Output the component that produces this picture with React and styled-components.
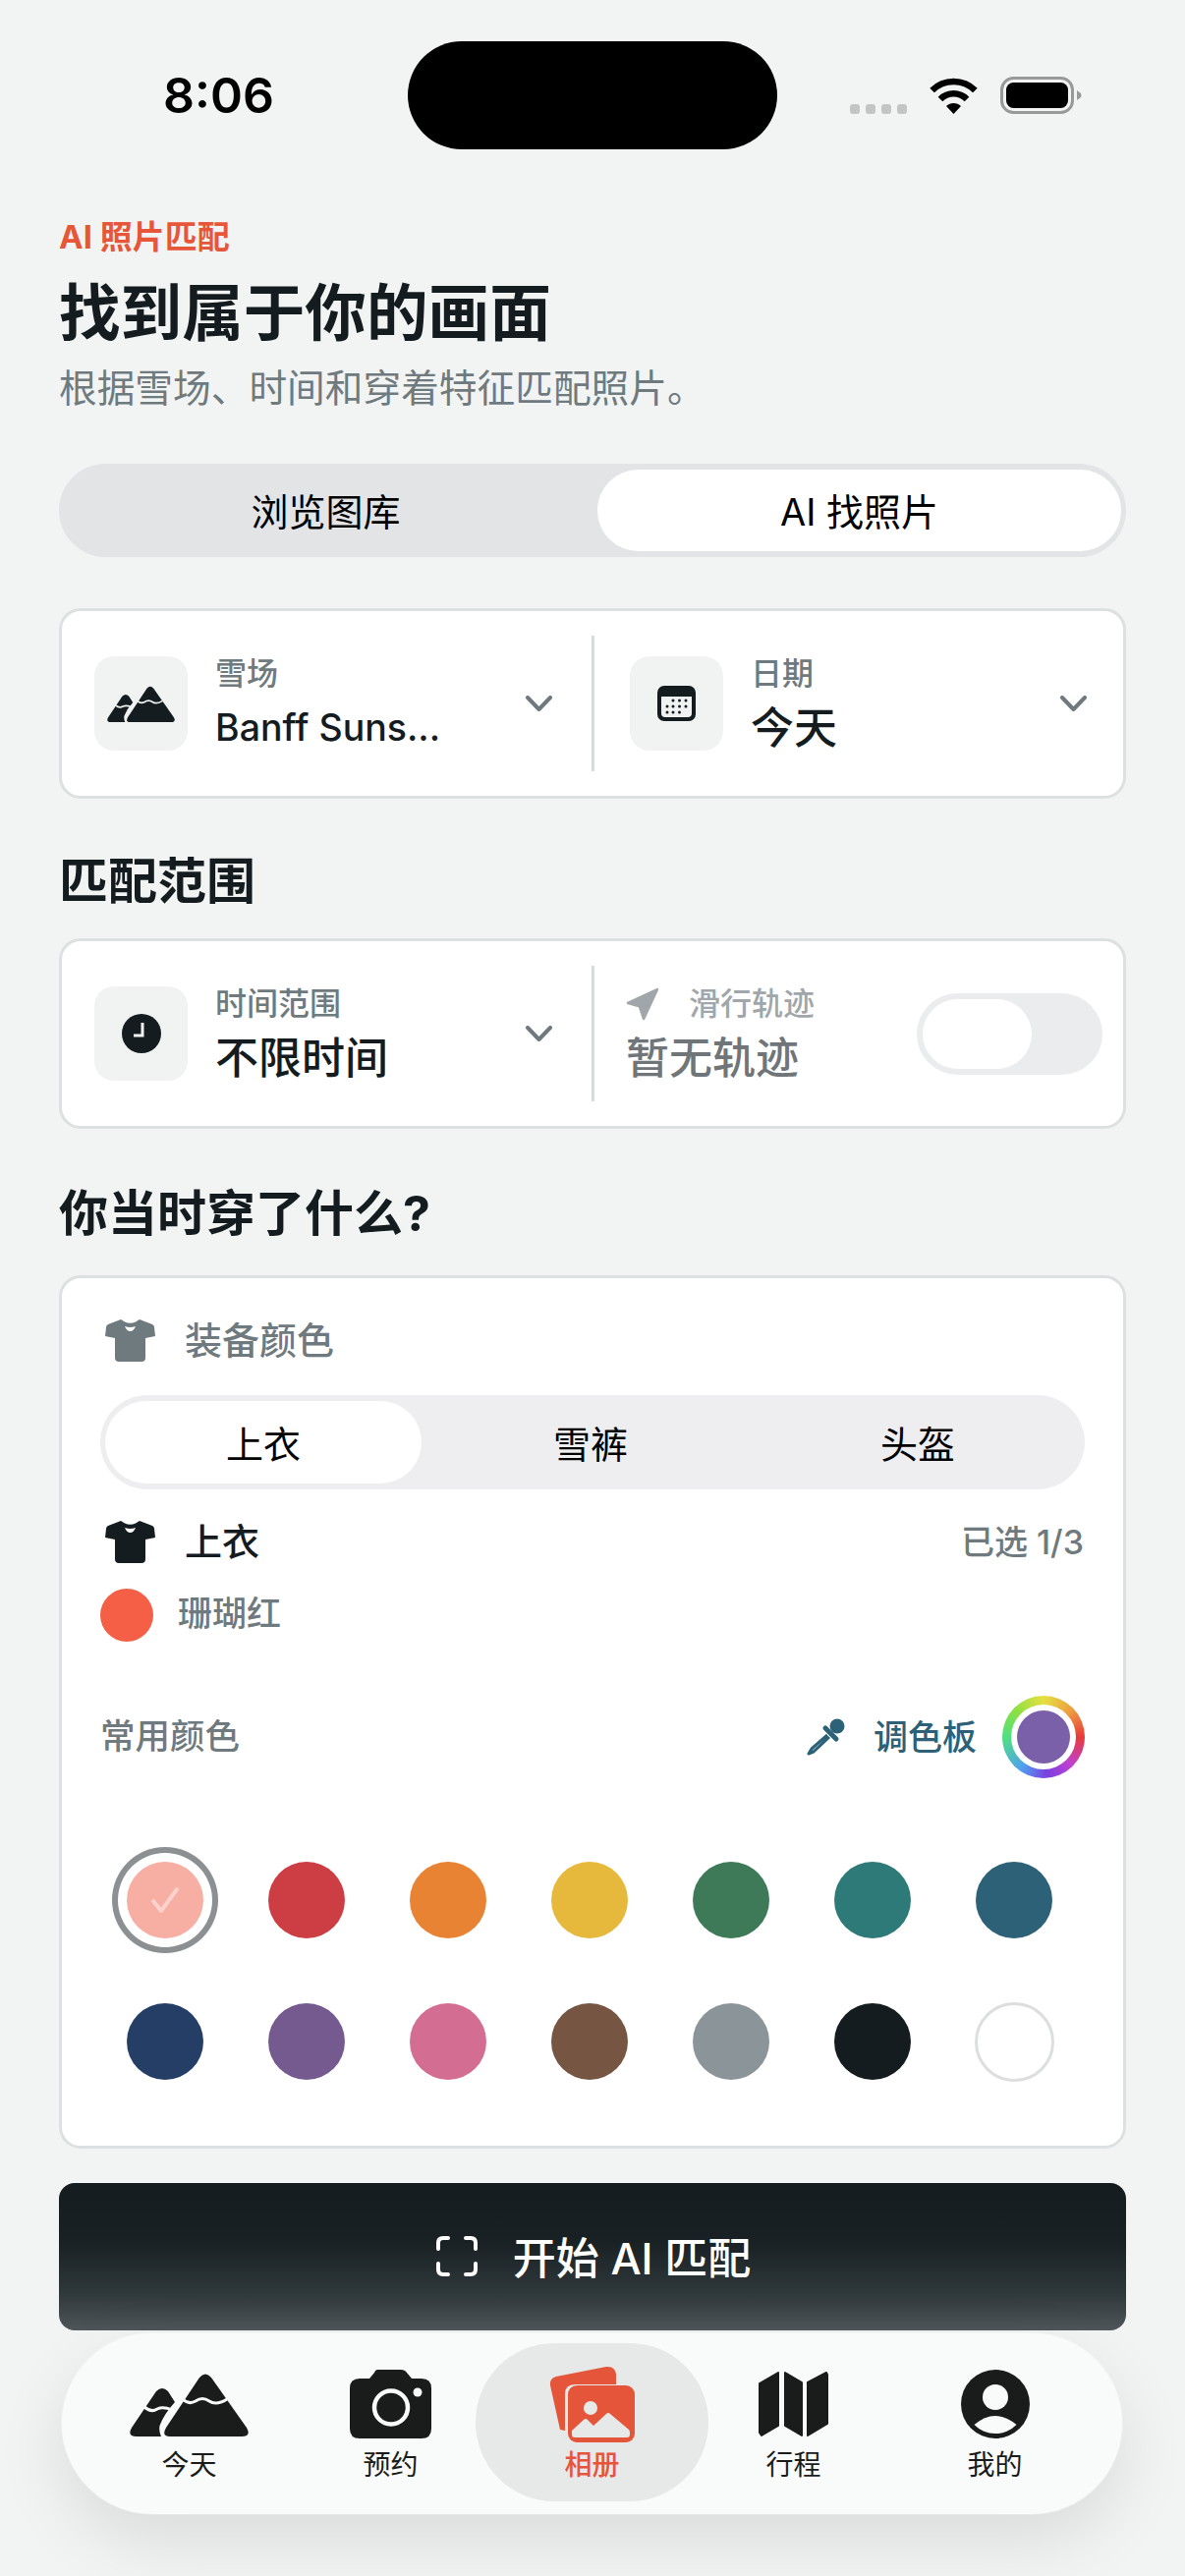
import React from "react";
import styled, { createGlobalStyle } from "styled-components";

const Global = createGlobalStyle`
  html, body { margin: 0; padding: 0; background: #f2f4f4; }
  * { box-sizing: border-box; }
  body { font-family: Inter, "Noto Sans CJK SC", "Noto Sans", sans-serif; color: #141c1f; }
`;

const Page = styled.div`
  width: 1206px; height: 2622px; overflow: hidden; background: #f2f4f4; padding: 0 60px;
`;
const StatusBar = styled.div`
  height: 152px; padding-top: 42px; margin: 0 -60px; display: grid;
  grid-template-columns: 415px 376px 1fr; align-items: center;
`;
const Time = styled.div`
  font-size: 50px; font-weight: 600; color: #000; text-align: center; padding-left: 59px; line-height: 60px; width: 386px;
`;
const Island = styled.div`height: 110px; border-radius: 55px; background: #000;`;
const StatusIcons = styled.div`
  display: flex; align-items: flex-start; height: 110px; padding: 36px 0 0 74px;
`;
const Dots = styled.div`display: flex; gap: 6px; margin-top: 28px; margin-right: 22px;`;
const Dot = styled.i`width: 10px; height: 10px; border-radius: 3px; background: #c4c4c4; display: block;`;
const WifiIcon = styled.svg`margin-right: 22px; display: block;`;

const Header = styled.header`padding-top: 71px;`;
const Eyebrow = styled.div`font-size: 33px; line-height: 36px; font-weight: 700; color: #e8563a;`;
const Title = styled.h1`margin: 21px 0 0; font-size: 62.600px; line-height: 76px; font-weight: 700; color: #141c1f;`;
const Sub = styled.p`margin: 14px 0 0; font-size: 38.700px; line-height: 50px; color: #6f7a7e;`;

const BigSeg = styled.div`
  margin-top: 52px; height: 95px; border-radius: 48px; background: #e2e4e6; padding: 6px 5px;
  display: grid; grid-template-columns: 1fr 1fr; gap: 10px;
`;
const SegBtn = styled.div`
  display: flex; align-items: center; justify-content: center; font-size: 38px; font-weight: 400; color: #000; padding-bottom: 2px;
  border-radius: 44px; background: ${p => (p.$on ? "#fff" : "transparent")};
`;

const Card = styled.section`
  background: #fff; border: 3px solid #dde0e0; border-radius: 22px;
`;
const PairCard = styled(Card)`
  margin-top: ${p => p.$mt}px; padding: 25px 0; display: grid; grid-template-columns: 539px 1fr;
`;
const Cell = styled.div`
  height: 138px; display: flex; align-items: center; padding: ${p => p.$pad};
  & + & { border-left: 3px solid #d8dbdb; }
`;
const Tile = styled.div`
  width: 95px; height: 96px; flex: none; border-radius: 20px; background: #f1f3f3;
  display: flex; align-items: center; justify-content: center; margin-right: 28px;
`;
const CellText = styled.div`flex: 1; min-width: 0; margin-top: 3px;`;
const Label = styled.div`font-size: 32px; line-height: 36px; color: #6f7a7e; font-weight: 500;`;
const Value = styled.div`
  font-size: ${p => p.$size || 44}px; line-height: 52px; margin-top: 11px; font-weight: 500; color: #141c1f; white-space: nowrap;
`;
const Chevron = styled.svg`flex: none; display: block;`;

const Section = styled.h2`
  margin: ${p => p.$mt}px 0 0; font-size: 50px; line-height: 60px; font-weight: 700; color: #141c1f;
`;
const TrackLabel = styled.div`display: flex; align-items: center; gap: 30px; font-size: 32px; line-height: 36px; color: #a0a6a9; font-weight: 500;`;
const TrackValue = styled(Value)`color: #6f7578; margin-top: 11px;`;
const Toggle = styled.div`
  width: 189px; height: 83px; border-radius: 42px; background: #ebecee; padding: 6px; flex: none;
`;
const Knob = styled.div`width: 111px; height: 71px; border-radius: 36px; background: #fff;`;

const ColorCard = styled(Card)`margin-top: 33px; padding: 42px 39px 34px;`;
const HeadRow = styled.div`
  display: flex; align-items: center; height: 43px; font-size: 38px; line-height: 43px; font-weight: 500; color: ${p => p.$color};
`;
const Shirt = styled.svg`margin: 0 30px 0 5px; display: block; flex: none;`;
const SmallSeg = styled.div`
  margin-top: 34px; height: 96px; border-radius: 48px; background: #eeeef0; padding: 6px 5px;
  display: grid; grid-template-columns: repeat(3, 322px); column-gap: 11px;
`;
const Spacer = styled.div`flex: 1;`;
const Count = styled.span`font-size: 34px; font-weight: 500; color: #6f7a7e; margin-right: 1px;`;
const PartRow = styled(HeadRow)`margin-top: 32px;`;
const PickedRow = styled.div`
  margin-top: 26px; display: flex; align-items: center; gap: 25px; height: 54px;
`;
const PickedName = styled.span`font-size: 35px; line-height: 40px; font-weight: 500; color: #6f7a7e; margin-bottom: 4px;`;
const PickedDot = styled.i`display: block; width: 54px; height: 54px; border-radius: 50%; background: #f55f45;`;
const ToolRow = styled.div`margin-top: 55px; display: flex; align-items: center; height: 84px;`;
const ToolLabel = styled.span`font-size: 35.500px; line-height: 40px; font-weight: 500; color: #6f7a7e;`;
const Palette = styled.span`
  display: flex; align-items: center; gap: 29px; margin-right: 26px; font-size: 35px; line-height: 40px; font-weight: 500; color: #2c6177;
`;
const Ring = styled.div`
  width: 84px; height: 84px; border-radius: 50%; padding: 9px;
  background: conic-gradient(#e6e040 0deg, #eda040 45deg, #e83a3a 90deg, #c040d0 135deg, #7a40e0 175deg, #50a0f0 215deg, #4fe080 270deg, #90e040 315deg, #e6e040 360deg);
`;
const RingGap = styled.div`width: 100%; height: 100%; border-radius: 50%; background: #fff; padding: 6px;`;
const RingFill = styled.div`width: 100%; height: 100%; border-radius: 50%; background: #7a60a8;`;

const Swatches = styled.div`
  margin: 52px 0 0 -6px; width: 1008px; display: grid; grid-template-columns: repeat(7, 144px); grid-auto-rows: 144px;
`;
const SwatchCell = styled.div`display: flex; align-items: center; justify-content: center;`;
const Swatch = styled.div`
  width: ${p => (p.$outline ? 81 : 78)}px; height: ${p => (p.$outline ? 81 : 78)}px; border-radius: 50%; background: ${p => p.$c};
  border: ${p => (p.$outline ? "3px solid #dcdedf" : "0")};
  box-shadow: ${p => (p.$on ? "0 0 0 9px #fff, 0 0 0 15px #8c9092" : "none")};
`;

const StartButton = styled.button`
  display: flex; width: 100%; margin: 35px 0 0; height: 150px; border: 0; border-radius: 16px; padding: 0 0 2px 1px;
  align-items: center; justify-content: center; gap: 35px; color: #fff;
  font-family: inherit; font-size: 44px; font-weight: 500;
  background: linear-gradient(180deg, #141c1f 0%, #192124 40%, #2f383b 75%, #50565a 100%);
`;

const Nav = styled.nav`
  margin: 3px 4px 0 3px; height: 184px; border-radius: 92px; background: #f9fbfa; padding: 10px 25px 13px 27px;
  display: grid; grid-template-columns: repeat(5, 205px);
  box-shadow: 0 26px 70px rgba(0, 0, 0, 0.1), 0 0 0 1px rgba(255,255,255,.5);
  position: relative;
`;
const NavItem = styled.div`
  display: flex; flex-direction: column; align-items: center; padding-top: 17px;
  border-radius: 80px; margin: 0 ${p => (p.$on ? "-16px" : "0")};
  background: ${p => (p.$on ? "#e6e9e7" : "transparent")};
  color: ${p => (p.$on ? "#e5553a" : "#1a1c1c")};
`;
const NavIcon = styled.div`height: 90px; display: flex; align-items: center; justify-content: center;`;
const NavLabel = styled.div`font-size: 28px; line-height: 32px; font-weight: ${p => (p.$on ? 500 : 400)}; margin-top: 1px;`;

const Mountains = ({ w, h, bg, color = "#1a1c1c" }) => (
  <svg width={w} height={h} viewBox="0 0 121 65" style={{ display: "block" }}>
    <path fill={color} d="M71 5Q77-2 83 5L119 56Q124 65 114 65L41 65Q32 65 37 56Z" />
    <path fill={color} d="M27 19Q33 13 39 19L46 30Q35 42 30.500 54Q29.500 60 32 65L7 65Q-3 65 2 56Z" />
    <path fill="none" stroke={bg} strokeWidth="3" d="M54 27Q60 33 67 29Q74 24 81 29Q88 34 99 27" />
    <path fill="none" stroke={bg} strokeWidth="3" d="M15 35Q22 41 28 37Q34 34 43 38" />
  </svg>
);
const Calendar = () => (
  <svg width="39" height="36" viewBox="0 0 39 36" style={{ display: "block" }}>
    <rect width="39" height="36" rx="7" fill="#141c1f" />
    <path d="M4 11H35V28Q35 32 31 32H8Q4 32 4 28Z" fill="#f1f3f3" />
    {[[16,15],[22.500,15],[29,15],[10,21],[16,21],[22.500,21],[29,21],[10,27],[16,27],[22.500,27]].map(([x,y]) => (
      <circle key={x + "-" + y} cx={x} cy={y} r="1.500" fill="#141c1f" />
    ))}
  </svg>
);
const Clock = () => (
  <svg width="40" height="40" viewBox="0 0 40 40" style={{ display: "block" }}>
    <circle cx="20" cy="20" r="20" fill="#141c1f" />
    <path d="M21 9V22H12" fill="none" stroke="#f1f3f3" strokeWidth="3" />
  </svg>
);
const Arrow = () => (
  <svg width="34" height="34" viewBox="0 0 32 32" style={{ display: "block" }}>
    <path d="M30 2L2 15L13 18L17 30Z" fill="#a0a6a9" stroke="#a0a6a9" strokeWidth="2.500" strokeLinejoin="round" />
  </svg>
);
const Down = () => (
  <Chevron width="27" height="16" viewBox="0 0 27 16">
    <path d="M2 2L13.500 14L25 2" fill="none" stroke="#6f7a7e" strokeWidth="4" strokeLinecap="round" strokeLinejoin="round" />
  </Chevron>
);
const ShirtIcon = ({ color }) => (
  <Shirt width="51" height="43" viewBox="0 0 51 43">
    <path fill={color} d="M16 0L20 2.500Q25.500 5 31 2.500L35 0L48 5Q50 6 50 8L51 17L41 19L41 39Q41 43 37 43L14 43Q10 43 10 39L10 19L0 17L1 8Q1 6 3 5Z" />
    <path fill="#fff" d="M20 7Q25.500 9 31 7Q29 12 25.500 12Q22 12 20 7Z" />
  </Shirt>
);
const Pipette = () => (
  <svg width="39" height="38" viewBox="0 0 39 38" style={{ display: "block" }}>
    <circle cx="31" cy="8" r="7.500" fill="#2c6177" />
    <path d="M19 10L30 21" stroke="#2c6177" strokeWidth="5" strokeLinecap="round" />
    <path d="M21 17L5 31L2 36L7 34L23 19" fill="none" stroke="#2c6177" strokeWidth="3" strokeLinejoin="round" />
  </svg>
);
const Scan = () => (
  <svg width="44" height="43" viewBox="0 0 44 43" style={{ display: "block" }}>
    <path d="M3 14V8Q3 3 8 3H13M31 3H36Q41 3 41 8V14M41 29V35Q41 40 36 40H31M13 40H8Q3 40 3 35V29" fill="none" stroke="#fff" strokeWidth="4" strokeLinecap="round" />
  </svg>
);
const Camera = () => (
  <svg width="83" height="70" viewBox="0 0 83 70" style={{ display: "block" }}>
    <path fill="#1a1c1c" d="M28 0H52Q56 0 58 3L63 9H73Q83 9 83 19V60Q83 70 73 70H10Q0 70 0 60V19Q0 9 10 9H20L25 3Q26 0 28 0Z" />
    <circle cx="42" cy="38.500" r="17" fill="none" stroke="#f9fbfa" strokeWidth="4.500" />
    <circle cx="69" cy="23" r="4.500" fill="#f9fbfa" />
  </svg>
);
const Photos = () => (
  <svg width="88" height="78" viewBox="0 0 88 78" style={{ display: "block" }}>
    <path fill="#e5553a" d="M7 11L58 1Q67 0 68 9L68 19H26Q16 19 16 29V66L11 65L1 20Q0 13 7 11Z" />
    <rect x="19" y="20" width="68" height="58" rx="9" fill="#e5553a" />
    <circle cx="42" cy="43" r="7" fill="#e6e9e7" />
    <path fill="#e6e9e7" d="M23 66L35 55Q37 53 39 55L45 61L58 49Q60 47 62 49L81 65Q82 66 82 68V70Q82 73 79 73H26Q23 73 23 70Z" />
  </svg>
);
const MapIcon = () => (
  <svg width="71" height="67" viewBox="0 0 71 67" style={{ display: "block" }}>
    <g fill="#1a1c1c" stroke="#1a1c1c" strokeWidth="2" strokeLinejoin="round">
      <path d="M1 12L20 1V55L3 65L1 62Z" />
      <path d="M27 1L44 11V65L27 55Z" />
      <path d="M50 11L69 1L70 3V53L50 65Z" />
    </g>
  </svg>
);
const Person = () => (
  <svg width="70" height="70" viewBox="0 0 70 70" style={{ display: "block" }}>
    <circle cx="35" cy="35" r="35" fill="#1a1c1c" />
    <circle cx="35" cy="28" r="13" fill="#f9fbfa" />
    <path fill="#f9fbfa" d="M13.500 56Q35 38 56.500 56A30 30 0 0 1 13.500 56Z" />
  </svg>
);

const COLORS = ["#f7aea3","#cc3d44","#e98334","#e6b83c","#3e7a58","#2e7a78","#2c6177","#253e66","#755a90","#d36d92","#765542","#8b9599","#141c1f","#ffffff"];
const NAV = [
  ["今天", <Mountains key="a" w={121} h={65} bg="#f9fbfa" />],
  ["预约", <Camera key="b" />],
  ["相册", <Photos key="c" />, true],
  ["行程", <MapIcon key="d" />],
  ["我的", <Person key="e" />],
];

export default function App() {
  return (
    <>
      <Global />
      <Page>
        <StatusBar>
          <Time>8:06</Time>
          <Island />
          <StatusIcons>
            <Dots><Dot /><Dot /><Dot /><Dot /></Dots>
            <WifiIcon width="51" height="38" viewBox="0 0 51 38">
              <path d="M3.600 14A31 31 0 0 1 47.400 14" fill="none" stroke="#000" strokeWidth="6.500" />
              <path d="M12 23A19 19 0 0 1 39 23" fill="none" stroke="#000" strokeWidth="6.500" />
              <path d="M25.500 38L18 30A10.600 10.600 0 0 1 33 30Z" fill="#000" />
            </WifiIcon>
            <svg width="83" height="38" viewBox="0 0 83 38" style={{ display: "block" }}>
              <rect x="1.500" y="1.500" width="72" height="35" rx="12" fill="none" stroke="#999" strokeWidth="3" />
              <rect x="6" y="6" width="63" height="26" rx="7.500" fill="#000" />
              <path d="M78 14L82 17Q83 19 82 21L78 24Z" fill="#999" />
            </svg>
          </StatusIcons>
        </StatusBar>

        <Header>
          <Eyebrow>AI 照片匹配</Eyebrow>
          <Title>找到属于你的画面</Title>
          <Sub>根据雪场、时间和穿着特征匹配照片。</Sub>
        </Header>

        <BigSeg>
          <SegBtn>浏览图库</SegBtn>
          <SegBtn $on>AI 找照片</SegBtn>
        </BigSeg>

        <PairCard $mt={52}>
          <Cell $pad="0 40px 0 33px">
            <Tile><Mountains w={69} h={37} bg="#f1f3f3" color="#141c1f" /></Tile>
            <CellText><Label>雪场</Label><Value $size={37.500}>Banff Suns...</Value></CellText>
            <Down />
          </Cell>
          <Cell $pad="0 37px 0 36px">
            <Tile><Calendar /></Tile>
            <CellText><Label>日期</Label><Value>今天</Value></CellText>
            <Down />
          </Cell>
        </PairCard>

        <Section $mt={54}>匹配范围</Section>

        <PairCard $mt={28}>
          <Cell $pad="0 40px 0 33px">
            <Tile><Clock /></Tile>
            <CellText><Label>时间范围</Label><Value>不限时间</Value></CellText>
            <Down />
          </Cell>
          <Cell $pad="0 21px 0 32px">
            <CellText>
              <TrackLabel><Arrow />滑行轨迹</TrackLabel>
              <TrackValue>暂无轨迹</TrackValue>
            </CellText>
            <Toggle><Knob /></Toggle>
          </Cell>
        </PairCard>

        <Section $mt={56}>你当时穿了什么?</Section>

        <ColorCard>
          <HeadRow $color="#6f7a7e"><ShirtIcon color="#6f7a7e" />装备颜色</HeadRow>
          <SmallSeg>
            <SegBtn $on>上衣</SegBtn>
            <SegBtn>雪裤</SegBtn>
            <SegBtn>头盔</SegBtn>
          </SmallSeg>
          <PartRow $color="#141c1f">
            <ShirtIcon color="#141c1f" />上衣<Spacer /><Count>已选 1/3</Count>
          </PartRow>
          <PickedRow><PickedDot /><PickedName>珊瑚红</PickedName></PickedRow>
          <ToolRow>
            <ToolLabel>常用颜色</ToolLabel>
            <Spacer />
            <Palette><Pipette />调色板</Palette>
            <Ring><RingGap><RingFill /></RingGap></Ring>
          </ToolRow>
          <Swatches>
            {COLORS.map((c, i) => (
              <SwatchCell key={c}>
                <Swatch $c={c} $on={i === 0} $outline={c === "#ffffff"}>
                  {i === 0 && (
                    <svg width="78" height="78" viewBox="0 0 78 78" style={{ display: "block" }}>
                      <path d="M27 40L35 50L51 28" fill="none" stroke="#fbd2cc" strokeWidth="4" strokeLinecap="round" strokeLinejoin="round" />
                    </svg>
                  )}
                </Swatch>
              </SwatchCell>
            ))}
          </Swatches>
        </ColorCard>

        <StartButton><Scan />开始 AI 匹配</StartButton>

        <Nav>
          {NAV.map(([label, icon, on]) => (
            <NavItem key={label} $on={on}>
              <NavIcon>{icon}</NavIcon>
              <NavLabel $on={on}>{label}</NavLabel>
            </NavItem>
          ))}
        </Nav>
      </Page>
    </>
  );
}
